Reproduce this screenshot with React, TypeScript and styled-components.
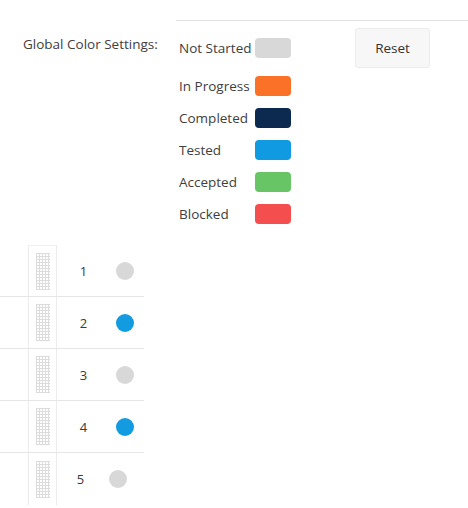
import styled, { createGlobalStyle } from 'styled-components';

const GlobalStyle = createGlobalStyle`
    body {
        margin: 0;
        background: #ffffff;
        font-family: 'Open Sans', 'Noto Sans', sans-serif;
        color: #404040;
    }
`;

const statuses = [
    { label: 'Not Started', color: '#d8d8d8' },
    { label: 'In Progress', color: '#fb7128' },
    { label: 'Completed', color: '#0c2a4f' },
    { label: 'Tested', color: '#0f9ae2' },
    { label: 'Accepted', color: '#68c565' },
    { label: 'Blocked', color: '#f54e4f' },
];

const rows = [
    { num: 1, color: '#d8d8d8', shifted: false },
    { num: 2, color: '#139be1', shifted: false },
    { num: 3, color: '#d8d8d8', shifted: false },
    { num: 4, color: '#139be1', shifted: false },
    { num: 5, color: '#d8d8d8', shifted: true },
];

export default function App() {
    return (
        <>
            <GlobalStyle />
            <Page>
                <Divider />
                <Settings>
                    <SettingsLabel>Global Color Settings:</SettingsLabel>
                    <Legend>
                        {statuses.map((s) => (
                            <LegendRow key={s.label}>
                                <LegendLabel>{s.label}</LegendLabel>
                                <Swatch color={s.color} />
                            </LegendRow>
                        ))}
                    </Legend>
                    <ResetButton>Reset</ResetButton>
                </Settings>
                <Table>
                    {rows.map((r, i) => (
                        <Row key={r.num} last={i === rows.length - 1}>
                            <EmptyCell />
                            <HandleCell first={i === 0}>
                                <Grip />
                            </HandleCell>
                            <NumCell shifted={r.shifted}>{r.num}</NumCell>
                            <DotCell shifted={r.shifted}>
                                <Dot color={r.color} />
                            </DotCell>
                        </Row>
                    ))}
                </Table>
            </Page>
        </>
    );
}

const Page = styled.div`
    width: 468px;
    height: 508px;
    overflow: hidden;
`;

const Divider = styled.div`
    margin: 20px 0 0 176px;
    border-top: 1px solid #e2e2e2;
`;

const Settings = styled.div`
    display: flex;
    align-items: flex-start;
    padding-top: 7px;
`;

const SettingsLabel = styled.div`
    width: 156px;
    padding: 8px 0 0 23px;
    font-size: 13.5px;
    line-height: 16px;
    white-space: nowrap;
`;

const Legend = styled.div`
    display: flex;
    flex-direction: column;
    gap: 12px;
    width: 176px;
    padding-top: 10px;

    & > div:first-child {
        margin-bottom: 6px;
    }
`;

const LegendRow = styled.div`
    display: flex;
    align-items: center;
    height: 20px;
`;

const LegendLabel = styled.span`
    width: 76px;
    font-size: 13.5px;
    white-space: nowrap;
`;

const Swatch = styled.span<{ color: string }>`
    width: 36px;
    height: 20px;
    border-radius: 4px;
    background: ${({ color }) => color};
`;

const ResetButton = styled.button`
    width: 75px;
    height: 40px;
    margin-top: 0;
    background: #f7f7f7;
    border: 1px solid #ececec;
    border-radius: 3px;
    font-family: inherit;
    font-size: 13.5px;
    color: #333;
`;

const Table = styled.div`
    display: flex;
    flex-direction: column;
    width: 144px;
    margin-top: 21px;
`;

const Row = styled.div<{ last: boolean }>`
    display: flex;
    height: 52px;
    border-bottom: ${({ last }) => (last ? 'none' : '1px solid #e6e6e6')};
    box-sizing: border-box;
`;

const EmptyCell = styled.div`
    width: 28px;
`;

const HandleCell = styled.div<{ first: boolean }>`
    width: 29px;
    box-sizing: border-box;
    border-left: 1px solid #ececec;
    border-right: 1px solid #ececec;
    border-top: ${({ first }) => (first ? '1px solid #f0f0f0' : 'none')};
    display: flex;
    justify-content: center;
    align-items: center;
`;

const Grip = styled.div`
    width: 14px;
    height: 37px;
    background-image: repeating-linear-gradient(
            to right,
            #dcdcdc 0,
            #dcdcdc 1px,
            transparent 1px,
            transparent 3px
        ),
        repeating-linear-gradient(to bottom, #dcdcdc 0, #dcdcdc 1px, transparent 1px, transparent 3px);
`;

const NumCell = styled.div<{ shifted: boolean }>`
    width: 53px;
    display: flex;
    align-items: center;
    justify-content: center;
    padding-right: ${({ shifted }) => (shifted ? '6px' : '0')};
    box-sizing: border-box;
    font-size: 13px;
    color: #3a3a3a;
`;

const DotCell = styled.div<{ shifted: boolean }>`
    width: 30px;
    display: flex;
    align-items: center;
    justify-content: center;
    padding-right: ${({ shifted }) => (shifted ? '6px' : '0')};
    box-sizing: border-box;
    margin-left: ${({ shifted }) => (shifted ? '-4px' : '0')};
`;

const Dot = styled.span<{ color: string }>`
    width: 18px;
    height: 18px;
    border-radius: 50%;
    background: ${({ color }) => color};
    flex-shrink: 0;
`;
